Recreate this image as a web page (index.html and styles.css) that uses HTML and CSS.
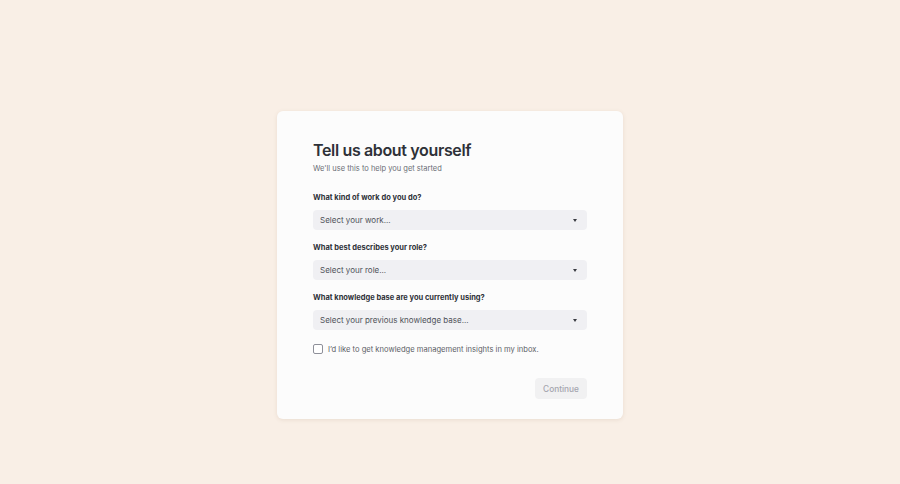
FILE: index.html
```html
<!DOCTYPE html>
<html lang="en">
<head>
<meta charset="utf-8">
<title>Tell us about yourself</title>
<link rel="stylesheet" href="styles.css">
</head>
<body>
<main class="page">
  <section class="card">
    <h1 class="title">Tell us about yourself</h1>
    <p class="subtitle">We'll use this to help you get started</p>

    <div class="field">
      <label class="label">What kind of work do you do?</label>
      <div class="select"><span>Select your work...</span><span class="caret"></span></div>
    </div>

    <div class="field">
      <label class="label">What best describes your role?</label>
      <div class="select"><span>Select your role...</span><span class="caret"></span></div>
    </div>

    <div class="field">
      <label class="label">What knowledge base are you currently using?</label>
      <div class="select"><span>Select your previous knowledge base...</span><span class="caret"></span></div>
    </div>

    <label class="check"><span class="box"></span><span>I’d like to get knowledge management insights in my inbox.</span></label>

    <div class="actions">
      <button class="btn" type="button">Continue</button>
    </div>
  </section>
</main>
</body>
</html>
```

FILE: styles.css
```css
* { box-sizing: border-box; }
html, body { margin: 0; padding: 0; }
body {
  background: #f9efe6;
  font-family: Inter, "Noto Sans", "Liberation Sans", sans-serif;
  color: #2f3137;
}
.page {
  height: 484px;
  display: flex;
  align-items: flex-start;
  justify-content: center;
  padding-top: 111px;
}
.card {
  width: 346px;
  height: 308px;
  background: #fcfcfc;
  border-radius: 6px;
  box-shadow: 0 1px 4px rgba(120, 90, 60, 0.12);
  padding: 28px 36px 0 36px;
  display: flex;
  flex-direction: column;
}
.title {
  margin: 0;
  font-size: 16px;
  line-height: 22px;
  font-weight: 600;
  letter-spacing: -0.35px;
  color: #2e3138;
}
.subtitle {
  margin: 2px 0 0 0;
  font-size: 7.5px;
  line-height: 12px;
  color: #6b6e76;
}
.field {
  display: flex;
  flex-direction: column;
  margin-top: 17px;
}
.field + .field { margin-top: 12px; }
.label {
  font-size: 7.5px;
  line-height: 12px;
  font-weight: 700;
  color: #2e3138;
}
.select {
  margin-top: 6px;
  height: 20px;
  background: #f0f0f3;
  border-radius: 4px;
  padding: 0 10px 0 7px;
  display: flex;
  align-items: center;
  justify-content: space-between;
  font-size: 8px;
  color: #4f5259;
}
.caret {
  width: 0; height: 0;
  border-left: 2.5px solid transparent;
  border-right: 2.5px solid transparent;
  border-top: 3px solid #3a3c42;
}
.check {
  margin-top: 14px;
  display: flex;
  align-items: center;
  gap: 5px;
  font-size: 7.6px;
  color: #5c5f67;
}
.box {
  width: 10px; height: 10px;
  border: 1.2px solid #8e9099;
  border-radius: 2px;
  background: #fff;
}
.actions {
  margin-top: 24px;
  display: flex;
  justify-content: flex-end;
}
.btn {
  font-family: inherit;
  height: 21px;
  width: 52px;
  padding: 0;
  border: none;
  border-radius: 4px;
  background: #f1f1f2;
  color: #a4a5ae;
  font-size: 8.3px;
  font-weight: 500;
}
```
